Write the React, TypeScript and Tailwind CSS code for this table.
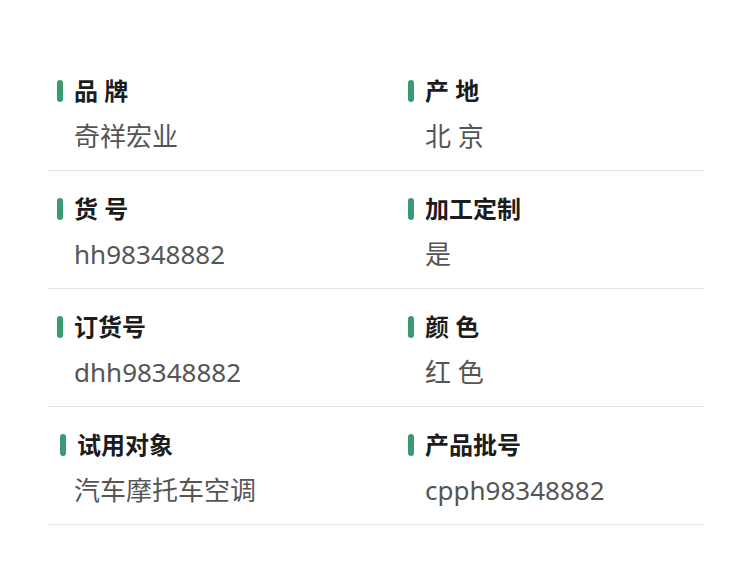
const rows: [string, string, string, string][] = [
  ['品 牌', '奇祥宏业', '产 地', '北 京'],
  ['货 号', 'hh98348882', '加工定制', '是'],
  ['订货号', 'dhh98348882', '颜 色', '红 色'],
  ['试用对象', '汽车摩托车空调', '产品批号', 'cpph98348882'],
];

function Cell({ label, value, shift }: { label: string; value: string; shift?: boolean }) {
  return (
    <div className={shift ? 'pl-[12px]' : 'pl-[9px]'}>
      <div className="flex items-center gap-[11px]">
        <span className="h-[22px] w-[6px] rounded-full bg-[#3a9a72]" />
        <span className="text-[24px] font-bold leading-[32px] text-[#1c1c1c]">{label}</span>
      </div>
      <div
        className={
          'mt-[11px] text-[26px] leading-[36px] text-[#555555] ' + (shift ? 'pl-[14px]' : 'pl-[17px]')
        }
      >
        {value}
      </div>
    </div>
  );
}

export default function App() {
  return (
    <div
      className="min-h-[570px] bg-white pl-[48px] pr-[46px] pt-[53px]"
      style={{ fontFamily: '"Noto Sans", "Noto Sans CJK SC", sans-serif' }}
    >
      {rows.map(([l1, v1, l2, v2], i) => (
        <div
          key={l1}
          className="grid grid-cols-[351px_1fr] border-b border-[#dde7e4] pb-[16px] pt-[22px]"
        >
          <Cell label={l1} value={v1} shift={i === 3} />
          <Cell label={l2} value={v2} />
        </div>
      ))}
    </div>
  );
}
